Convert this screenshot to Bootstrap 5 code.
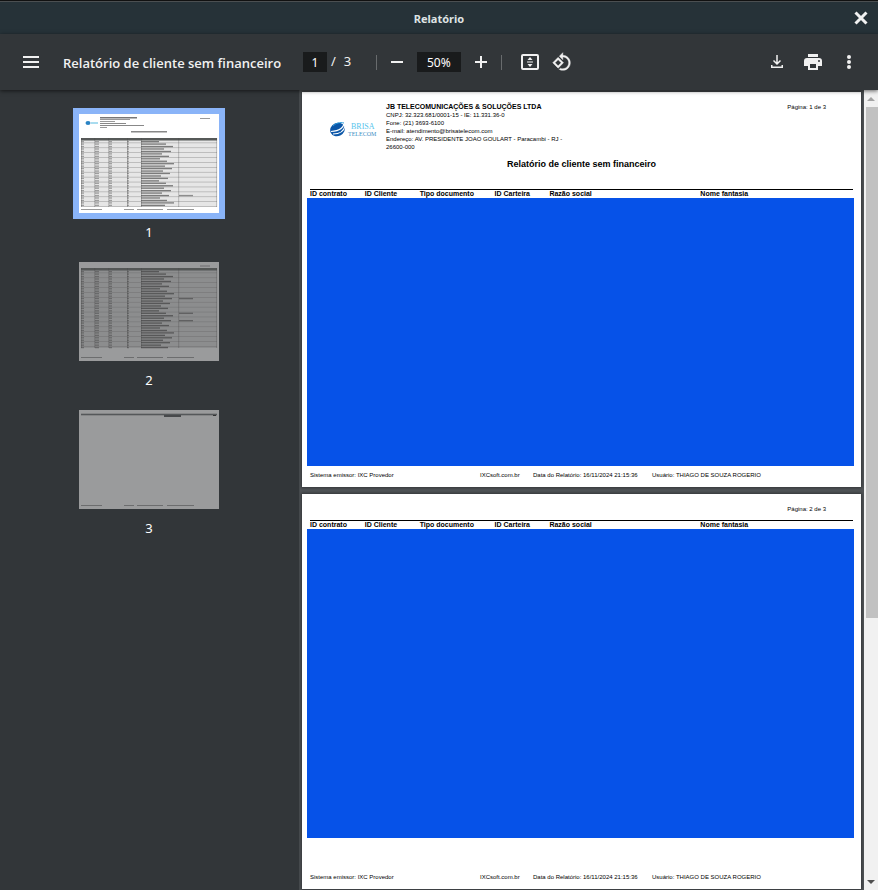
<!DOCTYPE html>
<html lang="pt-BR">
<head>
<meta charset="utf-8">
<meta name="viewport" content="width=device-width, initial-scale=1">
<title>Relatório</title>
<link href="https://cdn.jsdelivr.net/npm/bootstrap@5.3.0/dist/css/bootstrap.min.css" rel="stylesheet">
<style>
body { font-family: "Noto Sans", sans-serif; background: #323639; color: #f1f1f1; }
.modal-bar { height: 34px; border-top: 1px solid #111; background: #263238; box-shadow: inset 0 1px #4b4f51; font-size: 11px; color: #dfe3e4; display: grid; grid-template-columns: 1fr auto 1fr; padding: 0 5px; }
.viewer-bar { height: 56px; background: #323639; font-size: 13px; padding: 0 17px 0 11px; box-shadow: 0 1px 4px rgba(0,0,0,.6); z-index: 2; }
.doc-title { font: 600 13px/20px "Open Sans", sans-serif; width: 252px; padding: 2px 0 0 12px; }
.page-total { width: 32px; }
.icon-btn { width: 24px; height: 24px; padding: 0; border: 0; background: none; color: #f1f1f1; display: flex; align-items: center; justify-content: center; }
.menu-btn { width: 40px; }
.actions { gap: 12px; }
.bar-input { height: 20px; border: 0; padding: 0; background: #191b1c; color: #fff; text-align: center; font-size: 12px; }
.page-input { width: 24px; }
.zoom-input { width: 44px; }
.divider { width: 1px; height: 15px; background: #686b6d; }
.thumbs { width: 300px; background: #323639; padding: 24px 1px 0 0; border-right: 1px solid #45494c; }
.thumb { color: #fff; font-size: 13px; line-height: 20px; margin-bottom: 20px; }
.thumb svg { display: block; width: 140px; height: 99px; margin-bottom: 9px; background: #9a9b9c; }
.thumb.current svg { background: #fff; box-shadow: 0 0 0 6px #8ab4f8; }
.pages { background: #525659; padding: 2px 3px 0 2px; }
.sheet { aspect-ratio: 559 / 395; background: #fff; color: #000; padding: 11px 8px 8px; margin-bottom: 7px; font: 6px/8px "Liberation Sans", Arial, sans-serif; box-shadow: 0 0 3px 1px rgba(0,0,0,.4); }
.brand { width: 76px; padding: 18px 0 0 20px; }
.company { font-size: 7px; line-height: 8px; }
.address { width: 190px; margin-bottom: -1px; }
.page-no { padding-right: 27px; }
.sheet-title { font: bold 9px/10px "Liberation Sans", Arial, sans-serif; margin: 9px 0 20px; }
.report-head { table-layout: fixed; width: 100%; border-top: 1px solid #000; font-size: 7px; line-height: 8px; }
.report-head th { padding: 0; white-space: nowrap; }
.redacted { background: #0652e8; margin: 0 -1px 5px -3px; }
.second .redacted { margin-bottom: 35px; }
.second .page-no { margin-bottom: 7px; }
.sheet-foot { display: grid; grid-template-columns: 170fr 53fr 119fr 201fr; white-space: nowrap; }
.scroll { width: 14px; background: #f1f1f1; }
.scroll-arrow { height: 17px; border: 0; padding: 0; background: none; display: flex; align-items: center; justify-content: center; }
.scroll-thumb { background: #c1c1c1; flex: 2 0 0; margin-left: 2px; }
.scroll-rest { flex: 1 0 0; }
</style>
<script src="https://cdn.jsdelivr.net/npm/bootstrap@5.3.0/dist/js/bootstrap.bundle.min.js"></script>
</head>
<body class="vh-100 overflow-hidden d-flex flex-column">
<header class="modal-bar align-items-center flex-shrink-0">
  <span></span>
  <strong class="pt-1">Relatório</strong>
  <button type="button" class="icon-btn ms-auto" aria-label="Fechar"><svg width="14" height="14" viewBox="0 0 14 14" stroke="currentColor" stroke-width="3"><path d="M1.500 1.500l11 11M12.500 1.500l-11 11"/></svg></button>
</header>
<nav class="viewer-bar d-flex align-items-center flex-shrink-0 position-relative" aria-label="Ferramentas">
  <button type="button" class="icon-btn menu-btn" aria-label="Menu"><svg width="16" height="12" fill="currentColor"><path d="M0 0h16v2H0zM0 5h16v2H0zM0 10h16v2H0z"/></svg></button>
  <div class="doc-title text-nowrap">Relatório de cliente sem financeiro</div>
  <input class="bar-input page-input" value="1" aria-label="Página">
  <span class="ms-1">/</span><span class="ms-2 page-total">3</span>
  <span class="divider"></span>
  <button type="button" class="icon-btn mx-2" aria-label="Reduzir"><svg width="12" height="2"><path fill="currentColor" d="M0 0h12v2H0z"/></svg></button>
  <input class="bar-input zoom-input" value="50%" aria-label="Zoom">
  <button type="button" class="icon-btn mx-2" aria-label="Ampliar"><svg width="12" height="12"><path fill="currentColor" d="M5 0h2v5h5v2H7v5H5V7H0V5h5z"/></svg></button>
  <span class="divider"></span>
  <button type="button" class="icon-btn ms-3 me-2" aria-label="Ajustar à página"><svg width="20" height="16" viewBox="0 0 20 16"><rect x="2" y="1" width="16" height="14" rx="1" fill="none" stroke="currentColor" stroke-width="2"/><path fill="currentColor" d="M10 3l2.500 3h-5zM10 13l2.500-3h-5zM7 7.500h6v1H7z"/></svg></button>
  <button type="button" class="icon-btn" aria-label="Girar"><svg width="20" height="20" viewBox="0 0 24 24" fill="currentColor" stroke="currentColor" stroke-width=".5"><path d="M7.340 6.410L.860 12.900l6.490 6.480 6.490-6.480-6.500-6.490zM3.690 12.900l3.660-3.660L11 12.900l-3.660 3.660-3.650-3.660zm15.670-6.260C17.610 4.880 15.300 4 13 4V.760L8.760 5 13 9.240V6c1.790 0 3.580.680 4.950 2.050 2.730 2.730 2.730 7.170 0 9.900C16.580 19.320 14.790 20 13 20c-.970 0-1.940-.210-2.840-.610l-1.490 1.490C10.020 21.620 11.510 22 13 22c2.300 0 4.610-.880 6.360-2.640 3.520-3.510 3.520-9.210 0-12.720z"/></svg></button>
  <div class="actions d-flex ms-auto">
    <button type="button" class="icon-btn" aria-label="Baixar"><svg width="12" height="14" viewBox="0 0 12 14" fill="none" stroke="currentColor" stroke-width="1.500"><path d="M6 0v8.500M2.500 5.500L6 9l3.500-3.500M.750 10v2.250h10.500V10"/></svg></button>
    <button type="button" class="icon-btn" aria-label="Imprimir"><svg width="18" height="16" viewBox="0 0 18 16" fill="currentColor"><path d="M4 0h10v3H4zM3 4h12a3 3 0 0 1 3 3v5h-4v4H4v-4H0V7a3 3 0 0 1 3-3zm3 6v4h6v-4zm9-4a1 1 0 1 0 0 2 1 1 0 0 0 0-2z" fill-rule="evenodd"/></svg></button>
    <button type="button" class="icon-btn" aria-label="Mais ações"><svg width="4" height="14" fill="currentColor"><circle cx="2" cy="2" r="2"/><circle cx="2" cy="7" r="2"/><circle cx="2" cy="12" r="2"/></svg></button>
  </div>
</nav>
<main class="d-flex flex-grow-1 overflow-hidden">
  <aside class="thumbs d-flex flex-column align-items-center flex-shrink-0">
    <a href="#p1" class="thumb current text-center text-decoration-none"><svg viewBox="0 0 140 99" data-page="1"></svg>1</a>
    <a href="#p2" class="thumb text-center text-decoration-none"><svg viewBox="0 0 140 99" data-page="2"></svg>2</a>
    <a href="#p3" class="thumb text-center text-decoration-none"><svg viewBox="0 0 140 99" data-page="3"></svg>3</a>
  </aside>
  <div class="pages flex-grow-1 overflow-hidden">
    <section id="p1" class="sheet d-flex flex-column">
      <div class="d-flex">
        <div class="brand">
          <svg width="48" height="17" viewBox="0 0 48 17" role="img" aria-label="Brisa Telecom">
            <ellipse cx="7.500" cy="8.500" rx="7.500" ry="6.500" transform="rotate(-25 7.500 8.500)" fill="#0c57a8"/>
            <path d="M14 1C14 7 10 10 1 10.500M15 5c-1 5-5 8-12 8" fill="none" stroke="#fff" stroke-width="1.200"/>
            <path d="M3 5c3-3 7-4 11-3" fill="none" stroke="#2b9bdb" stroke-width="1"/>
            <text x="21" y="8" font-family="Liberation Serif, serif" font-size="8" fill="#55c4ec">BRISA</text>
            <text x="18" y="15" font-family="Liberation Serif, serif" font-size="6" fill="#3e8fc4">TELECOM</text>
          </svg>
        </div>
        <div class="address">
          <div class="company fw-bold text-nowrap">JB TELECOMUNICAÇÕES &amp; SOLUÇÕES LTDA</div>
          <div>CNPJ: 32.323.681/0001-15 - IE: 11.331.36-0</div>
          <div>Fone: (21) 3693-6100</div>
          <div>E-mail: atendimento@brisatelecom.com</div>
          <div>Endereço: AV. PRESIDENTE JOAO GOULART - Paracambi - RJ -<br>26600-000</div>
        </div>
        <div class="page-no ms-auto">Página: 1 de 3</div>
      </div>
      <h1 class="sheet-title text-center">Relatório de cliente sem financeiro</h1>
      <table class="report-head">
        <colgroup><col width="10.1%"><col width="10.1%"><col width="13.8%"><col width="10.1%"><col width="27.8%"><col></colgroup>
        <thead><tr><th>ID contrato</th><th>ID Cliente</th><th>Tipo documento</th><th>ID Carteira</th><th>Razão social</th><th>Nome fantasia</th></tr></thead>
      </table>
      <div class="redacted flex-grow-1"></div>
      <footer class="sheet-foot"><span>Sistema emissor: IXC Provedor</span><span>IXCsoft.com.br</span><span>Data do Relatório: 16/11/2024 21:15:36</span><span>Usuário: THIAGO DE SOUZA ROGERIO</span></footer>
    </section>
    <section id="p2" class="sheet second d-flex flex-column">
      <div class="page-no text-end">Página: 2 de 3</div>
      <table class="report-head">
        <colgroup><col width="10.1%"><col width="10.1%"><col width="13.8%"><col width="10.1%"><col width="27.8%"><col></colgroup>
        <thead><tr><th>ID contrato</th><th>ID Cliente</th><th>Tipo documento</th><th>ID Carteira</th><th>Razão social</th><th>Nome fantasia</th></tr></thead>
      </table>
      <div class="redacted flex-grow-1"></div>
      <footer class="sheet-foot"><span>Sistema emissor: IXC Provedor</span><span>IXCsoft.com.br</span><span>Data do Relatório: 16/11/2024 21:15:36</span><span>Usuário: THIAGO DE SOUZA ROGERIO</span></footer>
    </section>
  </div>
  <div class="scroll d-flex flex-column flex-shrink-0">
    <button type="button" class="scroll-arrow" aria-label="Subir"><svg width="8" height="4"><path d="M0 4l4-4 4 4z" fill="#a3a3a3"/></svg></button>
    <div class="scroll-thumb"></div><div class="scroll-rest"></div>
    <button type="button" class="scroll-arrow" aria-label="Descer"><svg width="8" height="4"><path d="M0 0l4 4 4-4z" fill="#505050"/></svg></button>
  </div>
</main>
<script>
// Thumbnail previews: grey strokes stand for lines of text.
const bar = (x, y, w, h, fill, o = 1) => `<rect x="${x}" y="${y}" width="${w}" height="${h}" fill="${fill}" opacity="${o}"/>`;
document.querySelectorAll('svg[data-page]').forEach(svg => {
  const page = +svg.dataset.page;
  const first = page === 1;
  let out = '';
  [[2, 21], [45, 10], [58, 26], [88, 27]].forEach(([x, w]) => out += bar(x, 95, w, 1, first ? '#999' : '#6c6d6e'));
  if (page === 3) {
    out += bar(2, 3, 136, 3, '#858687') + bar(2, 4, 136, 1, '#55585a') + bar(85, 5, 17, 2, '#47494b') + bar(134, 5, 3, 1, '#333');
  } else {
    out += bar(121, first ? 4 : 3.500, 10, 1, first ? '#999' : '#6c6d6e');
    if (first) {
      out += '<ellipse cx="9" cy="9" rx="2.500" ry="2" fill="#2a83c4"/>' + bar(12, 8, 7, 2, '#a9dcef');
      out += bar(21, 3, 37, 1.500, '#777') + bar(21, 5, 30, 1, '#999') + bar(21, 7, 15, 1, '#999') + bar(21, 9, 26, 1, '#888') + bar(21, 11, 44, 1, '#888') + bar(21, 13, 7, 1, '#999') + bar(52, 17, 36, 1.500, '#888');
    }
    const top = first ? 24 : 6, bottom = first ? 93 : 86;
    out += bar(2, top, 136, bottom - top, first ? '#e6e6e6' : '#8c8d8e') + bar(2, top, 136, 2.500, '#3c403e', first ? .85 : .7);
    for (let y = top + 3, i = 0; y < bottom - 1; y += 2.450, i++) {
      if (i % 2 === 0) out += bar(2, y + 1.500, 136, 0.700, '#555', first ? .4 : .35);
      [[2, 3], [16, 4], [30, 3], [48, 2], [62, 18 + (i * 7) % 16]].forEach(([x, w]) => out += bar(x, y, w, 1.300, '#333', x > 60 ? .6 : .4));
      if (first ? i === 22 : i === 11 || i === 17 || i === 20) out += bar(100, y, 14, 1.300, '#333', .5);
    }
    [2, 15.500, 29.500, 48, 62, 99.500, 137.500].forEach(x => out += bar(x, top, .600, bottom - top, '#444', .5));
  }
  svg.innerHTML = out;
});
</script>
</body>
</html>
